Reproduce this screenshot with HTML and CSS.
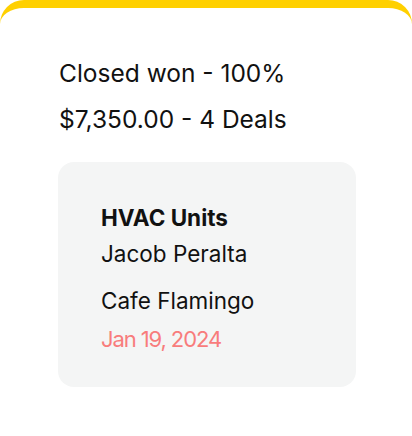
FILE: index.html
```html
<!DOCTYPE html>
<html>
<head>
<meta charset="utf-8">
<link rel="stylesheet" href="styles.css">
</head>
<body>
<div class="panel">
  <div class="summary">
    <div class="stage">Closed won - 100%</div>
    <div class="total">$7,350.00 - 4 Deals</div>
  </div>
  <div class="deal">
    <div class="deal-name">HVAC Units</div>
    <div class="contact">Jacob Peralta</div>
    <div class="account">Cafe Flamingo</div>
    <div class="date">Jan 19, 2024</div>
  </div>
</div>
</body>
</html>
```
FILE: styles.css
```css
html, body {
  margin: 0;
  padding: 0;
  background: #ffffff;
}
body {
  font-family: Inter, "Noto Sans", sans-serif;
  color: #111111;
}
.panel {
  border-top: 8px solid #ffd000;
  border-radius: 24px 24px 0 0;
  height: 428px;
  box-sizing: border-box;
  padding: 0 56px 0 58px;
}
.summary {
  padding-top: 42px;
  font-size: 24.5px;
  line-height: 46px;
  padding-left: 1px;
}
.deal {
  margin-top: 20px;
  background: #f4f5f5;
  border-radius: 16px;
  height: 225px;
  box-sizing: border-box;
  padding: 40px 0 0 43px;
  font-size: 22.5px;
}
.deal-name {
  font-weight: 700;
  line-height: 32px;
}
.contact {
  line-height: 40px;
}
.account {
  line-height: 44px;
  margin-top: 5px;
}
.date {
  color: #f87c7c;
  line-height: 32px;
  font-size: 22px;
  letter-spacing: -1.1px;
}
```
